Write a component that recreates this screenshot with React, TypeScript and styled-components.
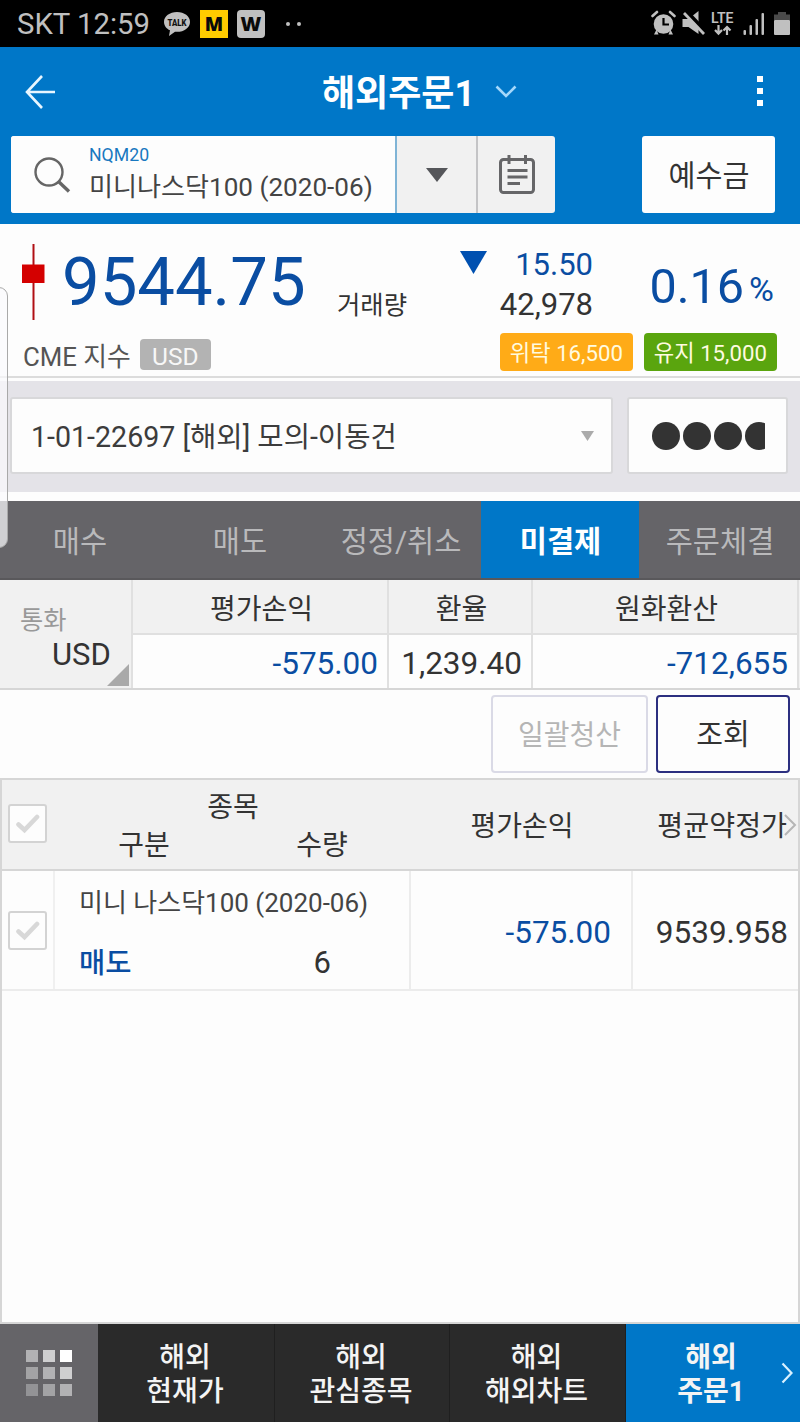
import React from "react";
import styled, { createGlobalStyle } from "styled-components";

const BLUE = "#0077c8";
const DEEP = "#0a4da2";
const INK = "#333333";

const Global = createGlobalStyle`
  *, *::before, *::after { box-sizing: border-box; }
  html, body { margin: 0; padding: 0; background: #fff; }
  body {
    font-family: Roboto, "Noto Sans CJK KR", sans-serif;
    color: ${INK};
    -webkit-font-smoothing: antialiased;
  }
  svg { display: block; flex: none; }
`;

const Screen = styled.div`
  position: relative;
  width: 800px;
  height: 1422px;
  display: flex;
  flex-direction: column;
  overflow: hidden;
  background: #fdfdfd;
`;

/* size, tone and top / left spacing vary per label */
const Label = styled.span<{ $size: number; $color?: string; $weight?: number; $mt?: number; $ml?: number }>`
  display: block;
  flex: none;
  white-space: nowrap;
  font-size: ${(p) => p.$size}px;
  line-height: ${(p) => Math.round(p.$size * 1.2)}px;
  color: ${(p) => p.$color ?? INK};
  font-weight: ${(p) => p.$weight ?? 400};
  margin-top: ${(p) => p.$mt ?? 0}px;
  margin-left: ${(p) => p.$ml ?? 0}px;
`;

const StatusBar = styled.div`
  flex: none;
  height: 47px;
  padding: 1px 7px 0 17px;
  display: flex;
  align-items: center;
  justify-content: space-between;
  background: #000;
`;

const StatusGroup = styled.div`
  display: flex;
  align-items: center;
`;

const Clock = styled.div`
  width: 147px;
`;

const Header = styled.header`
  flex: none;
  height: 177px;
  background: ${BLUE};
`;

const TitleBar = styled.div`
  height: 89px;
  padding: 0 37px 0 24px;
  display: flex;
  align-items: center;
  justify-content: space-between;
`;

const Title = styled.h1`
  margin: 0;
  display: flex;
  align-items: center;
  gap: 20px;
  padding-left: 25px;
`;

const SearchRow = styled.div`
  padding: 0 25px 0 11px;
  height: 77px;
  display: flex;
  justify-content: space-between;
`;

const SearchGroup = styled.div`
  display: flex;
  width: 544px;
  border-radius: 3px;
  overflow: hidden;
  background: #f1f1f1;
`;

const SearchField = styled.div`
  width: 384px;
  padding-left: 22px;
  display: flex;
  align-items: center;
  background: #fdfdfd;
`;

const SearchText = styled.div`
  padding: 0 0 1px 18px;
  display: flex;
  flex-direction: column;
  gap: 6px;
`;

const ToolCell = styled.div<{ $w: number; $line: string }>`
  width: ${(p) => p.$w}px;
  display: flex;
  align-items: center;
  justify-content: center;
  border-left: 2px solid ${(p) => p.$line};
`;

const DepositButton = styled.button`
  width: 133px;
  padding: 0;
  border: 0;
  border-radius: 3px;
  background: #fdfdfd;
  font: inherit;
  display: flex;
  align-items: center;
  justify-content: center;
`;

const Quote = styled.section`
  flex: none;
  height: 154px;
  border-bottom: 2px solid #dcdcdc;
`;

const QuoteTop = styled.div`
  height: 109px;
  padding: 0 26px 0 22px;
  display: flex;
`;

const Candle = styled.div`
  width: 23px;
  padding-top: 20px;
`;

const Price = styled.div`
  width: 292px;
  padding: 18px 0 0 17px;
`;

const Volume = styled.div`
  width: 123px;
  padding-top: 66px;
`;

const Change = styled.div`
  width: 133px;
  padding-top: 22px;
  display: flex;
  flex-direction: column;
  gap: 3px;
`;

const ChangeRow = styled.div`
  display: flex;
  justify-content: space-between;
  align-items: flex-start;
`;

const DownMark = styled.svg`
  margin-top: 5px;
`;

const Percent = styled.div`
  flex: 1;
  display: flex;
  align-items: center;
  justify-content: flex-end;
  height: 124px;
  gap: 5px;
`;

const QuoteBottom = styled.div`
  height: 38px;
  padding: 0 22px 0 23px;
  display: flex;
  align-items: center;
`;

const Tag = styled.span<{ $w: number; $h: number; $bg: string; $ml: number; $mt?: number }>`
  width: ${(p) => p.$w}px;
  height: ${(p) => p.$h}px;
  margin-left: ${(p) => p.$ml}px;
  margin-top: ${(p) => p.$mt ?? 0}px;
  background: ${(p) => p.$bg};
  border-radius: 4px;
  display: flex;
  align-items: center;
  justify-content: center;
`;

const Account = styled.section`
  flex: none;
  margin: 3px 0 9px;
  height: 111px;
  padding: 16px 12px 0 10px;
  background: #e4e3e8;
  display: flex;
  justify-content: space-between;
`;

const AccountBox = styled.div<{ $w: number }>`
  width: ${(p) => p.$w}px;
  height: 77px;
  padding: 0 17px 0 19px;
  background: #fdfdfd;
  border: 2px solid #d8d8da;
  border-radius: 3px;
  display: flex;
  align-items: center;
  justify-content: space-between;
`;

const Mask = styled.div`
  width: 113px;
  height: 30px;
  margin-left: 4px;
  display: flex;
  gap: 3px;
  align-items: center;
  overflow: hidden;
`;

const MaskDot = styled.i`
  flex: none;
  width: 28px;
  height: 28px;
  border-radius: 50%;
  background: #333;
`;

const Tabs = styled.nav`
  flex: none;
  height: 79px;
  display: grid;
  grid-template-columns: 159px 161px 161px 158px 161px;
  background: #656468;
  border-bottom: 2px solid #59585b;
`;

const Tab = styled.div<{ $active?: boolean }>`
  display: flex;
  align-items: center;
  justify-content: center;
  background: ${(p) => (p.$active ? BLUE : "transparent")};
  padding: 6px 0 0 1px;
`;

const Summary = styled.section`
  flex: none;
  height: 110px;
  display: grid;
  grid-template-columns: 133px 256px 144px 266px 1px;
  border-bottom: 2px solid #d6d6d6;
  background: #f1f1f1;
`;

const CurrencyCell = styled.div`
  position: relative;
  padding: 26px 0 0 20px;
  border-right: 2px solid #e0e0e0;
`;

const CornerMark = styled.svg`
  position: absolute;
  right: 2px;
  bottom: 2px;
`;

const SummaryCol = styled.div`
  display: grid;
  grid-template-rows: 55px 1fr;
  border-right: 2px solid #e0e0e0;
`;

const SummaryHead = styled.div`
  display: flex;
  align-items: center;
  justify-content: center;
  padding: 6px 0 0 3px;
  border-bottom: 2px solid #e0e0e0;
`;

const SummaryValue = styled.div`
  display: flex;
  align-items: center;
  justify-content: flex-end;
  padding: 5px 9px 0 0;
  background: #fdfdfd;
`;

const Actions = styled.div`
  flex: none;
  height: 88px;
  padding: 5px 10px 0 0;
  display: flex;
  justify-content: flex-end;
  gap: 8px;
`;

const ActionButton = styled.button<{ $w: number; $line: string }>`
  width: ${(p) => p.$w}px;
  height: 78px;
  padding: 0;
  border: 2px solid ${(p) => p.$line};
  border-radius: 4px;
  background: #fdfdfd;
  font: inherit;
  display: flex;
  align-items: center;
  justify-content: center;
`;

const Holdings = styled.section`
  flex: 1;
  border: 2px solid #d6d6d6;
`;

const HoldRow = styled.div<{ $head?: boolean }>`
  position: relative;
  display: grid;
  grid-template-columns: 53px 356px 222px 1fr;
  height: ${(p) => (p.$head ? 91 : 120)}px;
  background: ${(p) => (p.$head ? "#f1f1f1" : "transparent")};
  border-bottom: 2px solid ${(p) => (p.$head ? "#d6d6d6" : "#ececec")};
`;

const HoldCell = styled.div<{ $line?: boolean; $end?: number }>`
  display: flex;
  align-items: center;
  justify-content: ${(p) => (p.$end !== undefined ? "flex-end" : "center")};
  padding-right: ${(p) => p.$end ?? 0}px;
  border-right: ${(p) => (p.$line ? "2px solid #ececec" : "0")};
`;

const CheckCell = styled.div<{ $line?: boolean; $top: number }>`
  padding: ${(p) => p.$top}px 0 0 6px;
  border-right: ${(p) => (p.$line ? "2px solid #f0f0f0" : "0")};
`;

const CheckBox = styled.div`
  width: 39px;
  height: 39px;
  border: 2px solid #d3d3d3;
  border-radius: 3px;
  background: #fdfdfd;
  display: flex;
  align-items: center;
  justify-content: center;
`;

const HeadNames = styled.div`
  display: flex;
  flex-direction: column;
  align-items: center;
  padding-top: 11px;
  gap: 4px;
`;

const HeadPair = styled.div`
  display: grid;
  grid-template-columns: 1fr 1fr;
  width: 356px;
  justify-items: center;
`;

const Position = styled.div`
  padding: 16px 0 0 24px;
  border-right: 2px solid #ececec;
`;

const PositionRow = styled.div`
  display: flex;
  justify-content: space-between;
  align-items: flex-start;
  margin-top: 25px;
  padding-right: 78px;
`;

const MoreArrow = styled.svg`
  position: absolute;
  right: 1px;
  top: 33px;
`;

const BottomNav = styled.nav`
  flex: none;
  height: 98px;
  display: grid;
  grid-template-columns: 98px 177px 175px 176px 174px;
  background: #2a2a2a;
`;

const AppsCell = styled.div`
  background: #656468;
  display: grid;
  grid-template-columns: repeat(3, 12px);
  grid-auto-rows: 12px;
  gap: 5px;
  padding: 26px 0 0 26px;
`;

const AppDot = styled.i<{ $c: string }>`
  background: ${(p) => p.$c};
`;

const NavItem = styled.div<{ $active?: boolean }>`
  position: relative;
  padding-top: 17px;
  padding-right: ${(p) => (p.$active ? 4 : 2)}px;
  text-align: center;
  white-space: pre-line;
  font-size: 28px;
  line-height: 34px;
  font-weight: ${(p) => (p.$active ? 700 : 500)};
  color: #f4f4f4;
  background: ${(p) => (p.$active ? BLUE : "transparent")};
  border-right: ${(p) => (p.$active ? "0" : "1px solid #1f1f1f")};
`;

const NavArrow = styled.svg`
  position: absolute;
  right: 7px;
  top: 38px;
`;

const EdgeHandle = styled.div`
  position: absolute;
  left: -10px;
  top: 287px;
  width: 18px;
  height: 261px;
  border: 1px solid #a9a9a9;
  border-radius: 0 9px 9px 0;
  background: rgba(250, 250, 252, 0.72);
`;

const Check = () => (
  <svg width="24" height="20" viewBox="0 0 24 20">
    <path d="M2.500 10.500 8.500 16 21 3" fill="none" stroke="#d8d8d8" strokeWidth="4.600" strokeLinecap="round" />
  </svg>
);

const G = "#c0c0c0";

const TalkIcon = () => (
  <svg width="26" height="26" viewBox="0 0 26 26">
    <path d="M13 1C5.800 1 0 5.300 0 10.900c0 3.600 2.400 6.600 6 8.400L5 25l6-4.300 2 .1c7.200 0 13-4.300 13-9.900S20.200 1 13 1z" fill={G} />
    <text x="3.500" y="14.500" fontFamily="Roboto" fontWeight="900" fontSize="9.500" textLength="19" lengthAdjust="spacingAndGlyphs" fill="#111">TALK</text>
  </svg>
);

const Badge = styled.span<{ $bg: string; $r: number; $ml: number; $size: number }>`
  width: 28px;
  height: 28px;
  margin-left: ${(p) => p.$ml}px;
  border-radius: ${(p) => p.$r}px;
  background: ${(p) => p.$bg};
  color: #0a0a0a;
  display: flex;
  align-items: center;
  justify-content: center;
  font: 800 ${(p) => p.$size}px/28px "Open Sans", sans-serif;
`;

const MoreDots = styled.span`
  display: flex;
  gap: 7px;
  margin-left: 21px;
  &::before, &::after {
    content: "";
    width: 4px;
    height: 4px;
    border-radius: 50%;
    background: ${G};
  }
`;

const StatusIcons = () => (
  <svg width="142" height="28" viewBox="0 0 142 28">
    <g fill={G}>
      <circle cx="12.500" cy="14" r="9.800" />
      <path d="M5.500 19.500 3 24.500h4.500zM19.500 19.500l2.500 5h-4.500z" />
    </g>
    <path d="M1.500 6 6 2M23.500 6 19 2" stroke={G} strokeWidth="2.600" strokeLinecap="round" />
    <path d="M12.500 8v6.500H18" fill="none" stroke="#000" strokeWidth="2.200" />
    <path d="M31.500 9h6l10-8v23l-10-7h-6z" fill={G} />
    <path d="M35 1 55 22" stroke="#000" strokeWidth="4" />
    <path d="M33 3 53 24" stroke={G} strokeWidth="2.800" />
    <text x="60" y="12.500" fontFamily="Roboto" fontWeight="600" fontSize="14.500" textLength="22.500" lengthAdjust="spacingAndGlyphs" fill={G}>LTE</text>
    <path d="M67.500 15v8M64 20l3.500 3.600 3.500-3.600M76 25v-8M72.500 20.500 76 17l3.500 3.600" fill="none" stroke={G} strokeWidth="2.200" />
    <g fill={G}>
      <rect x="92.500" y="20" width="2.500" height="5" rx="1" />
      <rect x="98.500" y="15" width="2.500" height="10" rx="1" />
      <rect x="104.500" y="9" width="2.500" height="16" rx="1" />
      <rect x="110.500" y="3" width="2.500" height="22" rx="1" />
      <rect x="123" y="10" width="16" height="15" rx="1" />
    </g>
    <path d="M127 2h8v2.500h4v5.500h-16V4.500h4z" fill="#4a4a4a" />
  </svg>
);

const tabs = ["매수", "매도", "정정/취소", "미결제", "주문체결"];
const dots = ["#b2b2b4", "#cfcfd0", "#ffffff", "#a3a3a5", "#b2b2b4", "#cfcfd0", "#939396", "#a3a3a5", "#b2b2b4"];
const navItems = ["해외\n현재가", "해외\n관심종목", "해외\n해외차트", "해외\n주문1"];

export default function App() {
  return (
    <>
      <Global />
      <Screen>
        <StatusBar>
          <StatusGroup>
            <Clock><Label $size={29.3} $color={G} $mt={1}>SKT 12:59</Label></Clock>
            <TalkIcon />
            <Badge $bg="#ffcc00" $r={0} $ml={10} $size={19}>M</Badge>
            <Badge $bg={G} $r={4} $ml={9} $size={20}>W</Badge>
            <MoreDots />
          </StatusGroup>
          <StatusIcons />
        </StatusBar>

        <Header>
          <TitleBar>
            <svg width="33" height="36" viewBox="0 0 33 36">
              <path d="M18 2 3 18l15 16M3 18h28" fill="none" stroke="#e8f6ff" strokeWidth="2.600" />
            </svg>
            <Title>
              <Label $size={36} $color="#fff" $weight={700} $mt={5}>해외주문1</Label>
              <svg width="22" height="14" viewBox="0 0 22 14">
                <path d="M1.500 1.500 11 11 20.500 1.500" fill="none" stroke="#a5d8fb" strokeWidth="2.600" />
              </svg>
            </Title>
            <svg width="6" height="31" viewBox="0 0 6 31">
              <path d="M0 0h6v6H0zM0 12h6v6H0zM0 24h6v6H0z" fill="#fff" />
            </svg>
          </TitleBar>
          <SearchRow>
            <SearchGroup>
              <SearchField>
                <svg width="38" height="38" viewBox="0 0 38 38">
                  <circle cx="16" cy="16" r="13.500" fill="none" stroke="#666" strokeWidth="2.400" />
                  <path d="m26 26 10 9.500" stroke="#666" strokeWidth="3.400" />
                </svg>
                <SearchText>
                  <Label $size={17.7} $color="#1878c0">NQM20</Label>
                  <Label $size={26.1} $color="#444">미니나스닥100 (2020-06)</Label>
                </SearchText>
              </SearchField>
              <ToolCell $w={81} $line="#7fb4d6">
                <svg width="22" height="14" viewBox="0 0 22 14"><path d="M0 0h22L11 14z" fill="#55565a" /></svg>
              </ToolCell>
              <ToolCell $w={79} $line="#c4c4c6">
                <svg width="38" height="40" viewBox="0 0 38 40">
                  <g fill="none" stroke="#666668">
                    <rect x="2.500" y="4.500" width="33" height="33" rx="3" strokeWidth="3" />
                    <path d="M11 0v9M27.500 0v9M9.500 15.500h20M9.500 22h20M9.500 28.500H22" strokeWidth="3" />
                  </g>
                </svg>
              </ToolCell>
            </SearchGroup>
            <DepositButton><Label $size={29.3} $mt={4} $ml={1}>예수금</Label></DepositButton>
          </SearchRow>
        </Header>

        <Quote>
          <QuoteTop>
            <Candle>
              <svg width="23" height="76" viewBox="0 0 23 76">
                <path d="M11.500 0v76" stroke="#b00f14" strokeWidth="2" />
                <path d="M0 20.500h22.500v18.500H0z" fill="#d40000" />
              </svg>
            </Candle>
            <Price><Label $size={67} $color={DEEP}>9544.75</Label></Price>
            <Volume><Label $size={25.4}>거래량</Label></Volume>
            <Change>
              <ChangeRow>
                <DownMark width="27" height="24" viewBox="0 0 27 24"><path d="M0 0h27L13.500 23z" fill="#0050b0" /></DownMark>
                <Label $size={31} $color={DEEP}>15.50</Label>
              </ChangeRow>
              <ChangeRow>
                <span />
                <Label $size={31}>42,978</Label>
              </ChangeRow>
            </Change>
            <Percent>
              <Label $size={48.5} $color={DEEP} $mt={1}>0.16</Label>
              <Label $size={34} $color={DEEP} $mt={6}>%</Label>
            </Percent>
          </QuoteTop>
          <QuoteBottom>
            <Label $size={25.8} $color="#555" $mt={11}>CME 지수</Label>
            <Tag $w={71} $h={31} $bg="#b3b3b3" $ml={9} $mt={5}><Label $size={24.5} $color="#f7f7f7" $mt={3}>USD</Label></Tag>
            <Tag $w={133} $h={38} $bg="#ffab17" $ml={289}><Label $size={22.2} $color="#fffbe0" $mt={3}>위탁 16,500</Label></Tag>
            <Tag $w={133} $h={38} $bg="#5aa50e" $ml={11}><Label $size={22.2} $color="#fffbe0" $mt={3}>유지 15,000</Label></Tag>
          </QuoteBottom>
        </Quote>

        <Account>
          <AccountBox $w={603}>
            <Label $size={28.6} $color="#3c3c3c" $mt={3}>1-01-22697 [해외] 모의-이동건</Label>
            <svg width="13" height="10" viewBox="0 0 13 10"><path d="M0 0h13L6.500 10z" fill="#ababab" /></svg>
          </AccountBox>
          <AccountBox $w={161}>
            <Mask><MaskDot /><MaskDot /><MaskDot /><MaskDot /></Mask>
          </AccountBox>
        </Account>

        <Tabs>
          {tabs.map((t) => (
            <Tab key={t} $active={t === "미결제"}>
              <Label $size={29.5} $color={t === "미결제" ? "#fff" : "#b9b9bb"} $weight={t === "미결제" ? 700 : 400}>{t}</Label>
            </Tab>
          ))}
        </Tabs>

        <Summary>
          <CurrencyCell>
            <Label $size={25.3} $color="#999">통화</Label>
            <Label $size={31} $ml={32}>USD</Label>
            <CornerMark width="22" height="22" viewBox="0 0 22 22"><path d="M22 0v22H0z" fill="#a9a9a9" /></CornerMark>
          </CurrencyCell>
          <SummaryCol>
            <SummaryHead><Label $size={28}>평가손익</Label></SummaryHead>
            <SummaryValue><Label $size={31.5} $color={DEEP}>-575.00</Label></SummaryValue>
          </SummaryCol>
          <SummaryCol>
            <SummaryHead><Label $size={28}>환율</Label></SummaryHead>
            <SummaryValue><Label $size={31.5}>1,239.40</Label></SummaryValue>
          </SummaryCol>
          <SummaryCol>
            <SummaryHead><Label $size={28}>원화환산</Label></SummaryHead>
            <SummaryValue><Label $size={31.5} $color={DEEP}>-712,655</Label></SummaryValue>
          </SummaryCol>
        </Summary>

        <Actions>
          <ActionButton $w={157} $line="#dadae6"><Label $size={28} $color="#b5b5b5" $mt={4}>일괄청산</Label></ActionButton>
          <ActionButton $w={134} $line="#2c2f80"><Label $size={29} $mt={3}>조회</Label></ActionButton>
        </Actions>

        <Holdings>
          <HoldRow $head>
            <CheckCell $top={24}><CheckBox><Check /></CheckBox></CheckCell>
            <HeadNames>
              <Label $size={28}>종목</Label>
              <HeadPair>
                <Label $size={28}>구분</Label>
                <Label $size={28}>수량</Label>
              </HeadPair>
            </HeadNames>
            <HoldCell><Label $size={28} $mt={4}>평가손익</Label></HoldCell>
            <HoldCell $end={11}><Label $size={28.2} $mt={4}>평균약정가</Label></HoldCell>
            <MoreArrow width="14" height="24" viewBox="0 0 14 24"><path d="M2 2l10 10L2 22" fill="none" stroke="#b5b5b5" strokeWidth="2" /></MoreArrow>
          </HoldRow>
          <HoldRow>
            <CheckCell $top={40} $line><CheckBox><Check /></CheckBox></CheckCell>
            <Position>
              <Label $size={26} $color="#444" $mt={1}>미니 나스닥100 (2020-06)</Label>
              <PositionRow>
                <Label $size={28.5} $color={DEEP} $weight={500} $mt={3}>매도</Label>
                <Label $size={31}>6</Label>
              </PositionRow>
            </Position>
            <HoldCell $line $end={20}><Label $size={31.5} $color={DEEP} $mt={6}>-575.00</Label></HoldCell>
            <HoldCell $end={10}><Label $size={31.5} $mt={6}>9539.958</Label></HoldCell>
          </HoldRow>
        </Holdings>

        <BottomNav>
          <AppsCell>{dots.map((c, i) => <AppDot key={i} $c={c} />)}</AppsCell>
          {navItems.map((n, i) => (
            <NavItem key={n} $active={i === 3}>
              {n}
              {i === 3 && (
                <NavArrow width="12" height="22" viewBox="0 0 12 22"><path d="M1.500 1.500 10.500 11 1.500 20.500" fill="none" stroke="#d9f1ff" strokeWidth="2.200" /></NavArrow>
              )}
            </NavItem>
          ))}
        </BottomNav>

        <EdgeHandle />
      </Screen>
    </>
  );
}
